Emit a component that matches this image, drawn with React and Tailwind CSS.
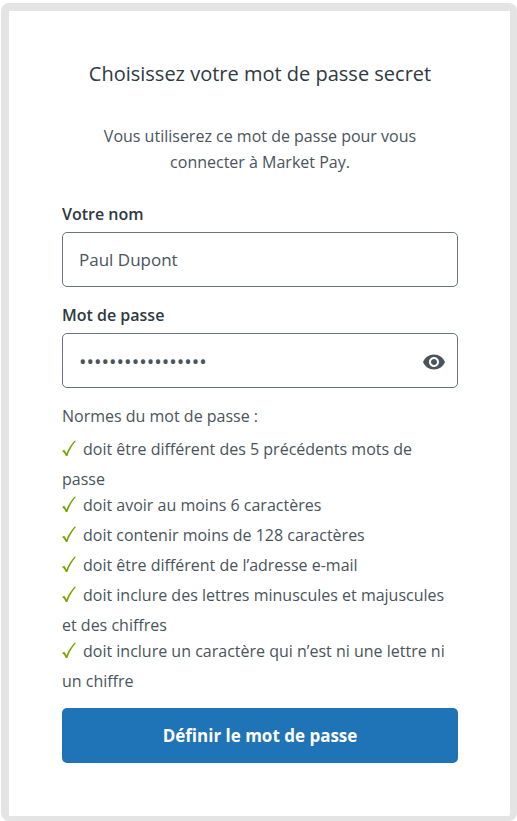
import React, { useState } from 'react';
import { MdVisibility, MdVisibilityOff } from 'react-icons/md';

const rules = [
    'doit être différent des 5 précédents mots de passe',
    'doit avoir au moins 6 caractères',
    'doit contenir moins de 128 caractères',
    'doit être différent de l’adresse e-mail',
    'doit inclure des lettres minuscules et majuscules et des chiffres',
    'doit inclure un caractère qui n’est ni une lettre ni un chiffre',
];

const CheckMark = () => (
    <svg
        viewBox="0 0 14 26"
        className="inline-block w-[14px] h-[26px] mr-[7px] align-[-11px] fill-[#78a300]"
        aria-hidden="true"
    >
        <path d="M0 11 L2.2 9.8 C3.1 10.8 3.8 12 4.4 13.4 C6.4 8.8 9 4.6 12.4 0.8 L14 0.8 C10.2 5.4 7.2 10.4 5.4 16 L3.8 16 C3 14 1.9 12.4 0 11 Z" />
    </svg>
);

const App = () => {
    const [name, setName] = useState('Paul Dupont');
    const [password, setPassword] = useState('Marketpay-2024-Ab');
    const [visible, setVisible] = useState(false);

    return (
        <main className="pt-[3px] pl-px font-['Open_Sans',sans-serif] text-base leading-[26px] text-[#49545c]">
            <form
                className="rounded-lg border-8 border-r-[7px] border-b-[5px] border-[#e4e4e4] bg-white pl-[53px] pr-[52px] pt-12 pb-[53px]"
                onSubmit={(e) => e.preventDefault()}
            >
                <h1 className="text-center text-xl leading-[30px] text-[#2f3941]">
                    Choisissez votre mot de passe secret
                </h1>
                <p className="mt-[34px] px-6 text-center">
                    Vous utiliserez ce mot de passe pour vous connecter à Market Pay.
                </p>

                <label htmlFor="name" className="mt-[26px] block font-semibold text-[#2f3941]">
                    Votre nom
                </label>
                <input
                    id="name"
                    type="text"
                    value={name}
                    onChange={(e) => setName(e.target.value)}
                    className="mt-[5px] block h-[55px] w-full rounded-[5px] border border-[#68737d] px-4 text-[17px]"
                />

                <label htmlFor="password" className="mt-[15px] block font-semibold text-[#2f3941]">
                    Mot de passe
                </label>
                <div className="mt-[5px] flex h-[55px] items-center rounded-[5px] border border-[#68737d] pt-[2px] pl-4 pr-[11px]">
                    <input
                        id="password"
                        type={visible ? 'text' : 'password'}
                        value={password}
                        onChange={(e) => setPassword(e.target.value)}
                        className="min-w-0 flex-1 text-xl outline-none"
                    />
                    <button
                        type="button"
                        aria-label="Afficher le mot de passe"
                        onClick={() => setVisible(!visible)}
                    >
                        {visible ? <MdVisibilityOff size={24} /> : <MdVisibility size={24} />}
                    </button>
                </div>

                <p className="mt-[15px]">Normes du mot de passe :</p>
                <ul className="mt-[7px]">
                    {rules.map((rule) => (
                        <li key={rule}>
                            <CheckMark />
                            {rule}
                        </li>
                    ))}
                </ul>

                <button
                    type="submit"
                    className="mt-[14px] h-[55px] w-full rounded-[5px] bg-[#1f73b7] text-[17px] font-bold text-white"
                >
                    Définir le mot de passe
                </button>
            </form>
        </main>
    );
};

export default App;
